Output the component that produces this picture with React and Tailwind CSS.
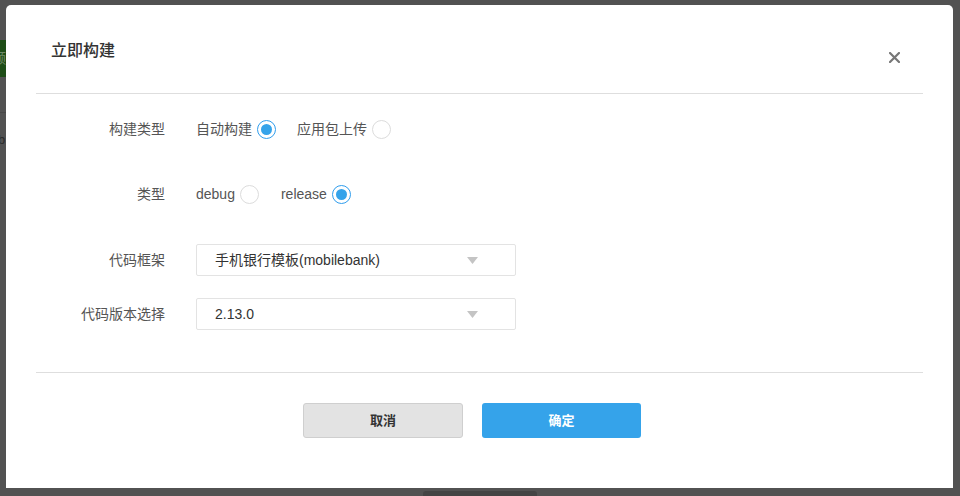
import React, { useState } from 'react';

const FONT = { fontFamily: '"Liberation Sans", "Noto Sans CJK SC", sans-serif' };

const Radio = ({ label, checked, onClick }) => (
    <button type="button" onClick={onClick} className="flex items-center gap-[5px]">
        <span className="text-[14px] text-[#555]">{label}</span>
        <span
            className={`w-[19px] h-[19px] rounded-full border flex items-center justify-center bg-white ${checked ? 'border-[#2f9ded] border-[1.5px]' : 'border-[#dcdcdc]'
                }`}
        >
            {checked && <span className="w-[11px] h-[11px] rounded-full bg-[#35a3ea]" />}
        </span>
    </button>
);

const Select = ({ value }) => (
    <div className="w-[320px] h-[32px] border border-[#e3e3e3] rounded-[2px] flex items-center justify-between pl-[18px] pr-[37px] bg-white">
        <span className="text-[14px] text-[#333]">{value}</span>
        <svg width="11" height="7" viewBox="0 0 11 7">
            <path d="M0 0 L11 0 L5.5 7 Z" fill="#c4c4c4" />
        </svg>
    </div>
);

const Row = ({ label, children }) => (
    <div className="flex items-center">
        <div className="w-[129px] text-right text-[14px] text-[#555] shrink-0">{label}</div>
        <div className="ml-[31px] flex items-center">{children}</div>
    </div>
);

const App = () => {
    const [buildType, setBuildType] = useState('auto');
    const [mode, setMode] = useState('release');

    return (
        <div className="w-[960px] h-[496px] bg-[#525252] relative overflow-hidden" style={FONT}>
            {/* page behind the overlay */}
            <div className="absolute left-0 top-[40px] w-[6px] h-[37px] bg-[#1e4d17] overflow-hidden">
                <span className="text-[14px] text-[#6f8a68] leading-[37px] -ml-[8px] block">频</span>
            </div>
            <div className="absolute left-0 top-[112px] w-[6px] h-px bg-[#474747]" />
            <div className="absolute left-0 top-[130px] w-[6px] text-[13px] text-[#2a2a2a] overflow-hidden">
                <span className="block -ml-[2px]">b</span>
            </div>
            <div className="absolute left-[423px] top-[491px] w-[114px] h-[10px] bg-[#444] rounded-[3px]" />

            {/* dialog */}
            <div className="absolute left-[6px] top-[5px] w-[947px] h-[483px] bg-white rounded-tl-[5px] rounded-tr-[5px] flex flex-col">
                <div className="mx-[30px] h-[89px] border-b border-[#dedede] flex items-start justify-between">
                    <h2 className="pl-[15px] pt-[36px] text-[16px] leading-[20px] text-[#333] font-medium">立即构建</h2>
                    <button type="button" className="mt-[47px] mr-[23px] w-[11px] h-[11px]">
                        <svg width="11" height="11" viewBox="0 0 11 11">
                            <path d="M1 1 L10 10 M10 1 L1 10" stroke="#777" strokeWidth="2.2" strokeLinecap="round" />
                        </svg>
                    </button>
                </div>

                <div className="mx-[30px] pt-[25px] pb-[42px] border-b border-[#dedede] flex flex-col">
                    <div className="h-[20px] flex items-center">
                        <Row label="构建类型">
                            <div className="flex items-center gap-[21px]">
                                <Radio label="自动构建" checked={buildType === 'auto'} onClick={() => setBuildType('auto')} />
                                <Radio label="应用包上传" checked={buildType === 'upload'} onClick={() => setBuildType('upload')} />
                            </div>
                        </Row>
                    </div>
                    <div className="h-[20px] mt-[45px] flex items-center">
                        <Row label="类型">
                            <div className="flex items-center gap-[22px]">
                                <Radio label="debug" checked={mode === 'debug'} onClick={() => setMode('debug')} />
                                <Radio label="release" checked={mode === 'release'} onClick={() => setMode('release')} />
                            </div>
                        </Row>
                    </div>
                    <div className="mt-[40px]">
                        <Row label="代码框架">
                            <Select value="手机银行模板(mobilebank)" />
                        </Row>
                    </div>
                    <div className="mt-[22px]">
                        <Row label="代码版本选择">
                            <Select value="2.13.0" />
                        </Row>
                    </div>
                </div>

                <div className="pt-[30px] flex justify-center gap-[19px] pr-[15px]">
                    <button type="button" className="w-[160px] h-[35px] bg-[#e3e3e3] border border-[#cfcfcf] rounded-[3px] text-[13px] font-bold text-[#333]">
                        取消
                    </button>
                    <button type="button" className="w-[159px] h-[35px] bg-[#35a3ea] rounded-[3px] text-[13px] font-bold text-white">
                        确定
                    </button>
                </div>
            </div>
        </div>
    );
};

export default App;
